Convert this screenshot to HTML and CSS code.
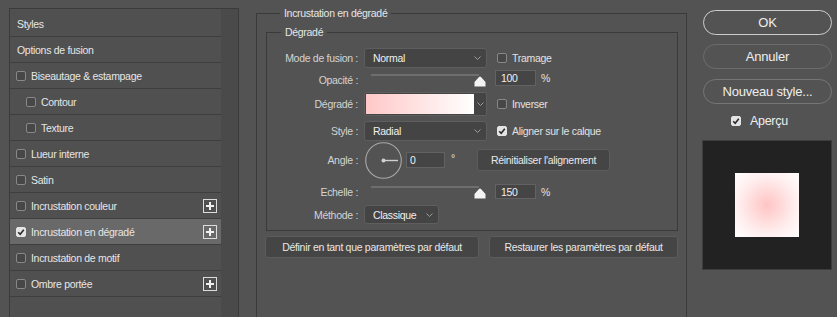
FILE: index.html
```html
<!DOCTYPE html>
<html lang="fr">
<head>
<meta charset="utf-8">
<title>Style de calque</title>
<link rel="stylesheet" href="styles.css">
</head>
<body>
<div class="app">
  <div class="left">
    <ul class="list">
      <li class="row plain">Styles</li>
      <li class="row plain">Options de fusion</li>
      <li class="row"><span class="cb"></span><span class="lbl">Biseautage &amp; estampage</span></li>
      <li class="row sub"><span class="cb"></span><span class="lbl">Contour</span></li>
      <li class="row sub"><span class="cb"></span><span class="lbl">Texture</span></li>
      <li class="row"><span class="cb"></span><span class="lbl">Lueur interne</span></li>
      <li class="row"><span class="cb"></span><span class="lbl">Satin</span></li>
      <li class="row"><span class="cb"></span><span class="lbl">Incrustation couleur</span><svg class="plus" width="14" height="14" viewBox="0 0 14 14"><rect x="0.5" y="0.5" width="13" height="13" fill="none" stroke="#dcdcdc"/><path d="M7 3v8M3 7h8" stroke="#f0f0f0" stroke-width="2"/></svg></li>
      <li class="row active"><span class="cb on"><svg width="8" height="8" viewBox="0 0 8 8"><path d="M1.2 4.2 L3.2 6.2 L6.8 1.8" fill="none" stroke="#2a2a2a" stroke-width="1.6"/></svg></span><span class="lbl">Incrustation en dégradé</span><svg class="plus" width="14" height="14" viewBox="0 0 14 14"><rect x="0.5" y="0.5" width="13" height="13" fill="none" stroke="#dcdcdc"/><path d="M7 3v8M3 7h8" stroke="#f0f0f0" stroke-width="2"/></svg></li>
      <li class="row"><span class="cb"></span><span class="lbl">Incrustation de motif</span></li>
      <li class="row"><span class="cb"></span><span class="lbl">Ombre portée</span><svg class="plus" width="14" height="14" viewBox="0 0 14 14"><rect x="0.5" y="0.5" width="13" height="13" fill="none" stroke="#dcdcdc"/><path d="M7 3v8M3 7h8" stroke="#f0f0f0" stroke-width="2"/></svg></li>
    </ul>
    <div class="scroll"></div>
  </div>

  <div class="mid">
    <fieldset class="outer">
      <legend>Incrustation en dégradé</legend>
      <fieldset class="inner">
        <legend>Dégradé</legend>

        <div class="frow r1">
          <span class="flabel">Mode de fusion :</span>
          <div class="sel w123"><span>Normal</span><svg class="chev" width="7" height="4" viewBox="0 0 7 4"><path d="M0.5 0.5 L3.5 3.5 L6.5 0.5" fill="none" stroke="#9c9c9c"/></svg></div>
          <span class="cb ml10"></span><span class="clbl">Tramage</span>
        </div>

        <div class="frow r2">
          <span class="flabel lower">Opacité :</span>
          <div class="slider">
            <div class="track t1"></div>
            <svg class="thumb th1" width="12" height="11" viewBox="0 0 12 11"><path d="M6 0.5 Q6.6 0.5 7.2 1.2 L11.5 6 V10.5 H0.5 V6 L4.8 1.2 Q5.4 0.5 6 0.5 Z" fill="#f4f4f4"/></svg>
          </div>
          <div class="num h16">100</div><span class="pct">%</span>
        </div>

        <div class="frow r3">
          <span class="flabel">Dégradé :</span>
          <div class="grad"><div class="gfill"></div><div class="garrow"><svg width="7" height="4" viewBox="0 0 7 4"><path d="M0.5 0.5 L3.5 3.5 L6.5 0.5" fill="none" stroke="#9c9c9c"/></svg></div></div>
          <span class="cb ml10"></span><span class="clbl">Inverser</span>
        </div>

        <div class="frow r4">
          <span class="flabel">Style :</span>
          <div class="sel w123"><span>Radial</span><svg class="chev" width="7" height="4" viewBox="0 0 7 4"><path d="M0.5 0.5 L3.5 3.5 L6.5 0.5" fill="none" stroke="#9c9c9c"/></svg></div>
          <span class="cb on ml10"><svg width="8" height="8" viewBox="0 0 8 8"><path d="M1.2 4.2 L3.2 6.2 L6.8 1.8" fill="none" stroke="#2a2a2a" stroke-width="1.6"/></svg></span><span class="clbl">Aligner sur le calque</span>
        </div>

        <div class="frow r5">
          <span class="flabel">Angle :</span>
          <svg class="dial" width="37" height="37" viewBox="0 0 37 37"><circle cx="18.5" cy="18.5" r="17.8" fill="none" stroke="#a8a8a8" stroke-width="1.1"/><path d="M18.5 18.5 H33" stroke="#d0d0d0" stroke-width="1.4"/><circle cx="18.5" cy="18.5" r="2" fill="#d0d0d0"/></svg>
          <div class="num angle">0</div><span class="deg">°</span>
          <div class="btn reset">Réinitialiser l'alignement</div>
        </div>

        <div class="frow r6">
          <span class="flabel">Echelle :</span>
          <div class="slider">
            <div class="track t2"></div>
            <svg class="thumb th2" width="12" height="11" viewBox="0 0 12 11"><path d="M6 0.5 Q6.6 0.5 7.2 1.2 L11.5 6 V10.5 H0.5 V6 L4.8 1.2 Q5.4 0.5 6 0.5 Z" fill="#f4f4f4"/></svg>
          </div>
          <div class="num h15">150</div><span class="pct">%</span>
        </div>

        <div class="frow r7">
          <span class="flabel">Méthode :</span>
          <div class="sel w75"><span>Classique</span><svg class="chev" width="7" height="4" viewBox="0 0 7 4"><path d="M0.5 0.5 L3.5 3.5 L6.5 0.5" fill="none" stroke="#9c9c9c"/></svg></div>
        </div>
      </fieldset>

      <div class="defaults">
        <div class="btn def1">Définir en tant que paramètres par défaut</div>
        <div class="btn def2">Restaurer les paramètres par défaut</div>
      </div>
    </fieldset>
  </div>

  <div class="right">
    <div class="pill ok">OK</div>
    <div class="pill cancel">Annuler</div>
    <div class="pill newstyle">Nouveau style...</div>
    <div class="preview-toggle"><span class="cb on"><svg width="8" height="8" viewBox="0 0 8 8"><path d="M1.2 4.2 L3.2 6.2 L6.8 1.8" fill="none" stroke="#2a2a2a" stroke-width="1.6"/></svg></span><span class="plbl">Aperçu</span></div>
    <div class="preview"><div class="swatch"></div></div>
  </div>
</div>
</body>
</html>
```

FILE: styles.css
```css
* { box-sizing: border-box; }
html, body { margin: 0; padding: 0; }
body {
  background: #535353;
  width: 837px;
  height: 317px;
  overflow: hidden;
  font-family: "Liberation Sans", Arial, sans-serif;
  font-size: 10.5px;
  letter-spacing: -0.3px;
  color: #e6e6e6;
}
.app { display: flex; align-items: flex-start; height: 317px; }

/* ---------- left list ---------- */
.left {
  margin: 8px 0 0 9px;
  width: 230px;
  height: 309px;
  border: 1px solid #3b3b3b;
  border-bottom: 0;
  display: flex;
}
.list {
  list-style: none;
  margin: 0;
  padding: 2px 0 0;
  width: 211px;
  height: 100%;
  background: #505050;
}
.scroll { width: 17px; height: 100%; background: #4a4a4a; }
.row {
  height: 26px;
  border-bottom: 1px solid #3e3e3e;
  display: flex;
  align-items: center;
  padding: 0 4px 0 6px;
  white-space: nowrap;
}
.row.plain { padding-left: 7px; }
.row.sub { padding-left: 16px; }
.row.active { background: #696969; }
.row .cb { margin-right: 5px; }
.plus { margin-left: auto; display: block; }

.cb {
  display: inline-flex;
  align-items: center;
  justify-content: center;
  flex: 0 0 auto;
  width: 10px;
  height: 10px;
  border: 1px solid #888;
  border-radius: 2px;
  background: #474747;
}
.cb.on { background: #e4e4e4; border-color: #e4e4e4; }
.cb svg { display: block; }
.ml10 { margin-left: 10px; }
.clbl { margin-left: 5px; color: #e2e2e2; white-space: nowrap; }

/* ---------- middle ---------- */
.mid { margin-left: 17px; width: 431px; }
fieldset { margin: 0; min-width: 0; border: 1px solid #3a3a3a; }
legend { padding: 0 4px; margin-left: 14px; line-height: 14px; color: #e6e6e6; }
.outer { margin-top: 6px; padding: 0 8px 0 9px; height: 330px; }
.inner { margin-top: 5px; padding: 9px 0 6px; }

.frow { display: flex; align-items: center; }
.flabel {
  width: 91px;
  margin-right: 6px;
  text-align: right;
  color: #d4d4d4;
  white-space: nowrap;
  flex: 0 0 auto;
}
.flabel.lower { margin-top: 4px; }
.r1 { height: 20px; }
.r2 { height: 16px; margin-top: 2px; }
.r3 { height: 24px; margin-top: 6px; }
.r4 { height: 20px; margin-top: 5px; }
.r5 { height: 36px; margin-top: 1px; }
.r6 { height: 15px; margin-top: 6px; }
.r7 { height: 19px; margin-top: 6px; }

.sel {
  display: flex;
  align-items: center;
  height: 100%;
  border: 1px solid #5e5e5e;
  border-radius: 3px;
  background: #444;
  padding: 0 5px 0 8px;
  color: #f0f0f0;
}
.w123 { width: 123px; }
.w75 { width: 75px; }
.chev { margin-left: auto; display: block; }

.slider { position: relative; width: 123px; height: 100%; flex: 0 0 auto; }
.track { width: 108px; height: 2px; margin-left: 7px; background: #6e6e6e; }
.t1 { margin-top: 4px; }
.t2 { margin-top: 2px; }
.thumb { position: absolute; left: 110px; display: block; }
.th1 { top: 6px; }
.th2 { top: 4px; }

.num {
  display: flex;
  align-items: center;
  margin-left: 8px;
  width: 41px;
  height: 16px;
  border: 1px solid #626262;
  background: #454545;
  padding-left: 5px;
  color: #f0f0f0;
}
.h15 { height: 15px; }
.pct { margin-left: 5px; color: #e2e2e2; }

.grad {
  display: flex;
  width: 123px;
  height: 24px;
  border: 1px solid #5e5e5e;
  border-radius: 2px;
  background: #444;
}
.gfill {
  flex: 1;
  margin: 1px 0 1px 1px;
  background: linear-gradient(to right, #ffc8c8, #ffffff);
}
.garrow { width: 12px; display: flex; align-items: center; justify-content: center; }

.dial { display: block; margin-left: 1px; flex: 0 0 auto; }
.num.angle { margin-left: 4px; width: 39px; padding-left: 3px; }
.deg { width: 32px; padding-left: 6px; align-self: flex-start; margin-top: 10px; color: #e2e2e2; flex: 0 0 auto; }

.btn {
  display: flex;
  align-items: center;
  justify-content: center;
  border: 1px solid #5c5c5c;
  border-radius: 3px;
  background: #454545;
  color: #e8e8e8;
  white-space: nowrap;
}
.reset { width: 133px; height: 22px; }
.defaults { display: flex; gap: 10px; margin: 5px 0 0 -1px; }
.defaults .btn { height: 22px; }
.def1 { width: 214px; }
.def2 { width: 189px; }

/* ---------- right ---------- */
.right { margin-left: 15px; width: 130px; display: flex; flex-direction: column; }
.pill {
  height: 25px;
  margin-left: 1px;
  border: 1px solid #6c6c6c;
  border-radius: 13px;
  display: flex;
  align-items: center;
  justify-content: center;
  font-size: 13px;
  letter-spacing: -0.2px;
  color: #eeeeee;
}
.ok { margin-top: 10px; border-color: #cdcdcd; }
.cancel { margin-top: 9px; }
.newstyle { margin-top: 10px; border-color: #767676; }
.preview-toggle { margin-top: 10px; height: 14px; display: flex; align-items: center; padding-left: 29px; }
.plbl { margin-left: 9px; font-size: 12.5px; color: #eeeeee; }
.preview {
  margin-top: 12px;
  width: 130px;
  height: 130px;
  background: #222;
  border: 1px solid #3d3d3d;
  display: flex;
  align-items: center;
  justify-content: center;
}
.swatch {
  width: 64px;
  height: 64px;
  background: radial-gradient(#ffc4c4 0%, #ffdcdc 35%, #fff0f0 65%, #ffffff 100%);
}
```
